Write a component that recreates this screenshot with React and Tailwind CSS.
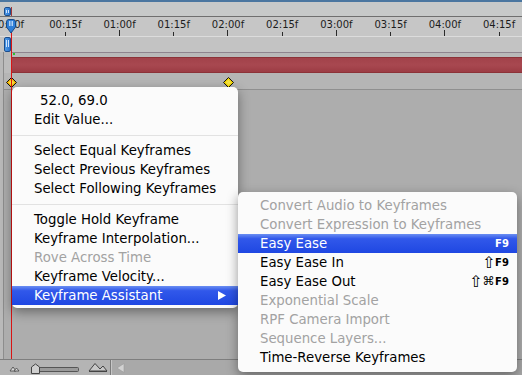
import React from "react";

const rulerLabels = ["0:00f","00:15f","01:00f","01:15f","02:00f","02:15f","03:00f","03:15f","04:00f","04:15f"];

const mainItems = [
  { t: "52.0, 69.0", indent: true },
  { t: "Edit Value..." },
  { sep: true },
  { t: "Select Equal Keyframes" },
  { t: "Select Previous Keyframes" },
  { t: "Select Following Keyframes" },
  { sep: true },
  { t: "Toggle Hold Keyframe" },
  { t: "Keyframe Interpolation..." },
  { t: "Rove Across Time", dis: true },
  { t: "Keyframe Velocity..." },
  { t: "Keyframe Assistant", hl: true, arrow: true },
];

const subItems = [
  { t: "Convert Audio to Keyframes", dis: true },
  { t: "Convert Expression to Keyframes", dis: true },
  { t: "Easy Ease", hl: true, k: [] },
  { t: "Easy Ease In", k: ["\u21E7"] },
  { t: "Easy Ease Out", k: ["\u21E7", "\u2318"] },
  { t: "Exponential Scale", dis: true },
  { t: "RPF Camera Import", dis: true },
  { t: "Sequence Layers...", dis: true },
  { t: "Time-Reverse Keyframes" },
];

function Handle({ className }) {
  return (
    <div className={"rounded-[2px] border border-[#1b4d8c] bg-[linear-gradient(to_right,#4f9be8,#2a73cc)] flex justify-center gap-[1px] pt-[2px] " + className}>
      <div className="w-px h-[60%] bg-[#cfe4ff]" />
      <div className="w-px h-[60%] bg-[#cfe4ff]" />
    </div>
  );
}

function Diamond({ fill }) {
  return (
    <svg width="11" height="11" viewBox="0 0 11 11">
      <polygon points="5.5,0.5 10.5,5.5 5.5,10.5 0.5,5.5" fill={fill} stroke="#111" strokeWidth="1" />
      <polygon points="5.5,2.5 8.5,5.5 5.5,8.5 2.5,5.5" fill="#fff36a" opacity="0.6" />
    </svg>
  );
}

function MenuRow({ it }) {
  if (it.sep) {
    return (
      <div className="h-[12px] flex items-center">
        <div className="h-px w-full bg-[#e2e2e2]" />
      </div>
    );
  }
  const color = it.hl ? "text-white" : it.dis ? "text-[#a2a2a2]" : "text-black";
  const bg = it.hl ? "bg-[linear-gradient(to_bottom,#6a8ef2,#3158ea_25%,#1f47e2)]" : "";
  return (
    <div className={"h-[19px] leading-[19px] flex items-center pl-[22px] whitespace-nowrap " + (it.k ? "pr-[8px] " : "pr-[10px] ") + color + " " + bg}>
      <span className={"flex-1 " + (it.indent ? "pl-[6px]" : "")}>{it.t}</span>
      {it.arrow && (
        <svg width="8" height="9" viewBox="0 0 8 9" className="mr-[2px]">
          <polygon points="0,0 8,4.5 0,9" fill="#fff" />
        </svg>
      )}
      {it.k && (
        <span className="flex items-center h-[19px]">
          {it.k.map((c, i) => (
            <span key={i} className={"w-[13px] text-center leading-[19px] " + (c === "\u21E7" ? "text-[16px]" : "text-[12px]")}>{c}</span>
          ))}
          <span className="w-[14px] text-center text-[10px] font-bold leading-[19px]">F9</span>
        </span>
      )}
    </div>
  );
}

export default function App() {
  return (
    <div className="relative w-[522px] h-[375px] overflow-hidden bg-[#adadad] font-['DejaVu_Sans',sans-serif] select-none">
      <div className="flex flex-col h-full">
        {/* top strip */}
        <div className="h-[2px] bg-[#4a76a0]" />
        {/* navigator */}
        <div className="h-[14px] bg-[#c7c9c9] flex pl-[4px] pt-[5px]">
          <Handle className="w-[7px] h-[9px]" />
          <div className="w-px h-[9px] bg-[#a23838]" />
        </div>
        <div className="h-px bg-[#6f6f6f]" />
        {/* ruler */}
        <div className="h-[19px] bg-[#c6c6c6] overflow-hidden">
          <div className="flex h-full -ml-[16px]">
            {rulerLabels.map((l, i) => (
              <div key={i} className="w-[54.22px] shrink-0 flex flex-col items-center">
                <div className="mt-[3px] text-[10px] leading-[10px] text-[#1c1c1c] whitespace-nowrap">{l}</div>
                <div className="flex-1" />
                <div className={"w-px bg-[#2a2a2a] " + (i % 2 ? "h-[4px]" : "h-[6px]")} />
              </div>
            ))}
          </div>
        </div>
        <div className="h-px bg-[#dcdcdc]" />
        {/* work area row */}
        <div className="h-[15px] bg-[#c3c3c3] flex pl-[4px]">
          <Handle className="w-[7px] h-[15px]" />
        </div>
        <div className="flex-1 flex flex-col bg-[#b9b9b9] pl-[3px]">
          <div className="flex-1 flex flex-col border-l border-[#8d8d8d]">
            <div className="h-px bg-[#8e848e] ml-[7px]" />
            <div className="h-[4px] bg-[#b9b9b9] flex pl-[9px]">
              <div className="w-[2px] h-[2px] bg-[#2fc02f]" />
            </div>
            {/* layer bar */}
            <div className="h-[16px] flex">
              <div className="w-[7px] bg-[#bcbcbc]" />
              <div className="flex-1 border-y border-[#8c3238] bg-[linear-gradient(to_bottom,#a2424a,#a84850_50%,#9c3c44)]" />
            </div>
            {/* keyframe row */}
            <div className="h-[16px] bg-[#b5b5b5] relative">
              <div className="absolute left-[2px] top-[4px]"><Diamond fill="#f2b400" /></div>
              <div className="absolute left-[219px] top-[4px]"><Diamond fill="#f2d400" /></div>
            </div>
            <div className="h-px bg-[#8f8f8f]" />
            <div className="flex-1 bg-[#adadad]" />
          </div>
        </div>
        {/* bottom bar */}
        <div className="h-[16px] border-t border-[#7e7e7e] flex">
          <div className="w-[111px] bg-[#b4b4b4] border-r border-[#7a7a7a]">
            <svg width="111" height="15" viewBox="0 0 111 15">
              <polygon points="10,11 13,7 16,11" fill="#d8d8d8" stroke="#444" strokeWidth="0.8" />
              <polygon points="14,11 16.5,8 19,11" fill="#d8d8d8" stroke="#444" strokeWidth="0.8" />
              <rect x="37.5" y="7.5" width="41" height="4" rx="1" fill="#9a9a9a" stroke="#555" strokeWidth="1" />
              <polygon points="31.5,13.5 31.5,7 35.5,4 39.5,7 39.5,13.5" fill="#cfcfcf" stroke="#444" strokeWidth="1" />
              <polygon points="89,11 95,3.5 100,9 103,6 107,11" fill="#c8c8c8" stroke="#444" strokeWidth="1" />
              <line x1="89" y1="11.5" x2="107" y2="11.5" stroke="#444" strokeWidth="1" />
            </svg>
          </div>
          <div className="flex-1 bg-[#a9a9a9] border-l border-[#c6c6c6] flex items-center pl-[4px]">
            <svg width="9" height="10" viewBox="0 0 9 10">
              <polygon points="8,0.5 8,9.5 1,5" fill="#d2d2d2" stroke="#9a9a9a" strokeWidth="0.6" />
            </svg>
          </div>
        </div>
      </div>

      {/* current time indicator */}
      <div className="absolute left-[11px] top-[32px] w-px h-[327px] bg-[#d81414]" />
      <svg className="absolute left-[5px] top-[19px]" width="12" height="15" viewBox="0 0 12 15">
        <path d="M1.5 3 Q1.5 0.5 4 0.5 H8 Q10.5 0.5 10.5 3 V8 L6 14 L1.5 8 Z" fill="#2e7fd8" stroke="#174a88" strokeWidth="1" />
        <line x1="4.5" y1="2" x2="4.5" y2="7" stroke="#d6e8ff" strokeWidth="0.8" />
        <line x1="6" y1="2" x2="6" y2="7" stroke="#d6e8ff" strokeWidth="0.8" />
        <line x1="7.5" y1="2" x2="7.5" y2="7" stroke="#d6e8ff" strokeWidth="0.8" />
      </svg>

      {/* main context menu */}
      <div className="absolute left-[12px] top-[87px] w-[226px] pt-[4px] pb-[3px] bg-[#fbfbfb] rounded-[5px] shadow-[0_4px_12px_rgba(0,0,0,0.4)] text-[13.3px]">
        {mainItems.map((it, i) => <MenuRow key={i} it={it} />)}
      </div>

      {/* submenu */}
      <div className="absolute left-[238px] top-[192px] w-[279px] pt-[4px] pb-[5px] bg-[#fbfbfb] rounded-[5px] shadow-[0_4px_12px_rgba(0,0,0,0.4)] text-[13.3px]">
        {subItems.map((it, i) => <MenuRow key={i} it={it} />)}
      </div>
    </div>
  );
}
